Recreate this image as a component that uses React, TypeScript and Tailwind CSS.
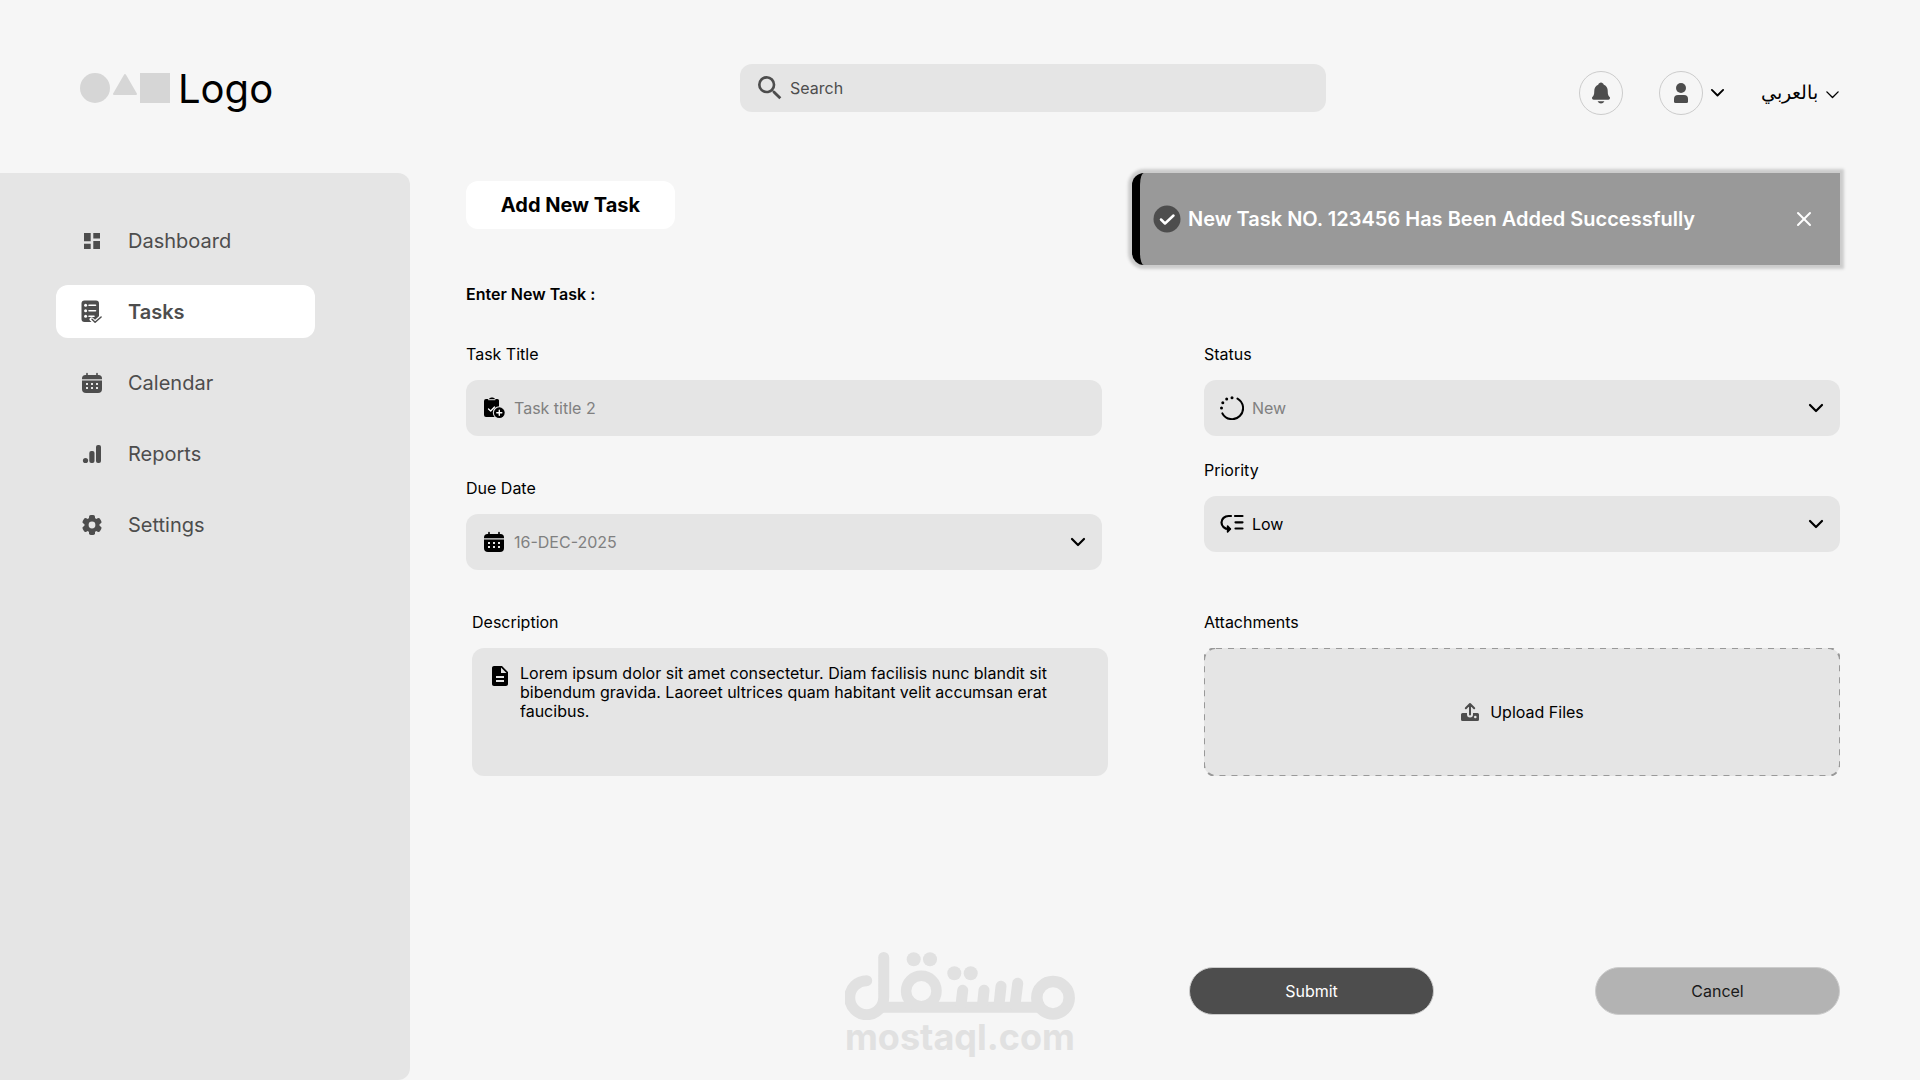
import React, { type ReactNode } from "react";
import { X } from "lucide-react";
import { MdSearch, MdDescription } from "react-icons/md";
import { IoNotifications } from "react-icons/io5";

function Chevron({ className }: { className: string }) {
  return (
    <svg viewBox="0 0 16 10" fill="none" stroke="currentColor" strokeLinecap="round" strokeLinejoin="round" className={className} aria-hidden="true">
      <path d="M2 2l6 6 6-6" />
    </svg>
  );
}

function PersonIcon() {
  return (
    <svg viewBox="0 0 24 24" fill="currentColor" className="size-6" aria-hidden="true">
      <circle cx="12" cy="7" r="5" />
      <path d="M9 14h6a4 4 0 0 1 4 4v2.500a1.500 1.500 0 0 1-1.500 1.500h-11A1.500 1.500 0 0 1 5 20.500V18a4 4 0 0 1 4-4z" />
    </svg>
  );
}

function DashboardIcon() {
  return (
    <svg viewBox="0 0 24 24" fill="currentColor" className="size-6" aria-hidden="true">
      <path d="M4 4h6.700v8.200H4zM13.300 4H20v5.400h-6.700zM4 14.800h6.700V20H4zM13.300 12H20v8h-6.700z" />
    </svg>
  );
}

function TasksIcon() {
  return (
    <svg viewBox="0 0 24 26" className="h-[26px] w-6" fill="none" aria-hidden="true">
      <rect x="1.500" y="1.500" width="17.500" height="21.500" rx="3" fill="currentColor" />
      <g fill="white">
        <circle cx="5.600" cy="6.300" r="1.500" />
        <circle cx="5.600" cy="11.800" r="1.500" />
        <circle cx="5.600" cy="17.200" r="1.500" />
      </g>
      <path d="M9 6.300h6.500M9 11.800h6.500M9 17.200h5" stroke="white" strokeWidth="1.600" strokeLinecap="round" />
      <path d="M11.500 20.300l3.600 3.200 6.500-6" stroke="white" strokeWidth="4" strokeLinecap="round" strokeLinejoin="round" />
      <path d="M12 20.300l3.100 3 6-5.300" stroke="currentColor" strokeWidth="1.500" strokeLinecap="round" strokeLinejoin="round" />
    </svg>
  );
}

function CalendarIcon() {
  return (
    <svg viewBox="0 0 24 24" className="size-6" fill="none" aria-hidden="true">
      <path d="M7 2.500v3M17 2.500v3" stroke="currentColor" strokeWidth="1.600" strokeLinecap="round" />
      <path d="M5.500 4h13A3.500 3.500 0 0 1 22 7.500v.8H2v-.8A3.500 3.500 0 0 1 5.500 4z" fill="currentColor" />
      <path d="M2 9.600h20V18a4 4 0 0 1-4 4H6a4 4 0 0 1-4-4z" fill="currentColor" />
      <path d="M6 12h2v2H6zM11 12h2v2h-2zM16 12h2v2h-2zM6 16h2v2H6zM11 16h2v2h-2zM16 16h2v2h-2z" fill="#e5e5e5" />
    </svg>
  );
}

function ReportsIcon() {
  return (
    <svg viewBox="0 0 24 24" fill="currentColor" className="size-6" aria-hidden="true">
      <circle cx="5.500" cy="18.500" r="2.600" />
      <rect x="9.300" y="9" width="5.200" height="12" rx="2" />
      <rect x="16" y="3" width="5" height="18" rx="2" />
    </svg>
  );
}

function SettingsIcon() {
  return (
    <svg viewBox="-12 -12 24 24" className="size-6 text-[#4d4d4d]" aria-hidden="true">
      <g fill="currentColor">
        <rect x="-3" y="-10" width="6" height="20" rx="1.800" />
        <rect x="-3" y="-10" width="6" height="20" rx="1.800" transform="rotate(60)" />
        <rect x="-3" y="-10" width="6" height="20" rx="1.800" transform="rotate(120)" />
        <circle r="7.600" />
      </g>
      <circle r="3.400" fill="#e5e5e5" />
    </svg>
  );
}

function ClipboardAddIcon() {
  return (
    <svg viewBox="0 0 24 24" className="size-6" fill="none" aria-hidden="true">
      <path d="M4 3h3a2.500 2 0 0 1 2.500-1.500h1A2.500 2 0 0 1 13 3h2.500A1.500 1.500 0 0 1 17 4.500V21H4a2 2 0 0 1-2-2V5a2 2 0 0 1 2-2z" fill="currentColor" />
      <path d="M6.500 3.600h6.500" stroke="#b5b5b5" strokeWidth="1.200" strokeLinecap="round" />
      <path d="M6.500 13l2.200 2 3.800-4" stroke="white" strokeWidth="1.300" strokeLinecap="round" strokeLinejoin="round" />
      <circle cx="17.300" cy="16.700" r="6.500" fill="#e5e5e5" />
      <circle cx="17.300" cy="16.700" r="5.400" fill="currentColor" />
      <path d="M17.300 14.200v5M14.800 16.700h5" stroke="white" strokeWidth="1.400" strokeLinecap="round" />
    </svg>
  );
}

function StatusIcon() {
  return (
    <svg viewBox="0 0 24 24" className="size-6" fill="none" aria-hidden="true">
      <path d="M17.500 2.600A11 11 0 1 1 2.400 17.400" stroke="currentColor" strokeWidth="2" strokeLinecap="round" />
      <g fill="currentColor">
        <circle cx="12" cy="1.700" r="1.500" />
        <circle cx="6.700" cy="3" r="1.500" />
        <circle cx="2.800" cy="6.800" r="1.500" />
        <circle cx="1.500" cy="12" r="1.500" />
      </g>
    </svg>
  );
}

function LowPriorityIcon() {
  return (
    <svg viewBox="0 0 24 24" className="size-6" fill="none" stroke="currentColor" strokeWidth="2.200" strokeLinecap="round" strokeLinejoin="round" aria-hidden="true">
      <path d="M11 4H8.500a7 6.500 0 0 0 0 13H10" />
      <path d="M7.600 14l2.800 3-2.800 3z" fill="currentColor" strokeWidth="1.600" />
      <path d="M15 4h7.500M15.500 10.300h7M15.500 16.500h7" />
    </svg>
  );
}

function UploadIcon() {
  return (
    <svg viewBox="0 0 20 20" className="size-5 text-[#4d4d4d]" fill="none" aria-hidden="true">
      <path d="M2.500 11H7v1.500a3 3 0 0 0 6 0V11h4.500A1.500 1.500 0 0 1 19 12.500v5a1.500 1.500 0 0 1-1.500 1.500h-15A1.500 1.500 0 0 1 1 17.500v-5A1.500 1.500 0 0 1 2.500 11z" fill="currentColor" />
      <circle cx="15.300" cy="15" r="1.300" fill="#e5e5e5" />
      <path d="M10 12.500V2.500M5.800 6.300L10 2l4.200 4.300" stroke="currentColor" strokeWidth="2" strokeLinecap="round" strokeLinejoin="round" />
    </svg>
  );
}

const navItems: { label: string; icon: ReactNode; active?: boolean }[] = [
  { label: "Dashboard", icon: <DashboardIcon /> },
  { label: "Tasks", icon: <TasksIcon />, active: true },
  { label: "Calendar", icon: <CalendarIcon /> },
  { label: "Reports", icon: <ReportsIcon /> },
  { label: "Settings", icon: <SettingsIcon /> },
];

function Header() {
  return (
    <header className="grid grid-cols-[660fr_586fr_514fr] items-start px-20 pt-16 pb-[58px]">
      <a href="#" className="flex h-12 items-center gap-2">
        <svg viewBox="0 0 90 30" className="h-[30px] w-[90px]" fill="#d6d6d6" aria-hidden="true">
          <circle cx="15" cy="15" r="15" />
          <path d="M45 2l11 19H34z" stroke="#d6d6d6" strokeWidth="2" strokeLinejoin="round" />
          <rect x="60" width="30" height="30" />
        </svg>
        <span className="pt-0.5 text-[40px] leading-[48px]">Logo</span>
      </a>
      <div className="flex h-12 items-center gap-1 rounded-xl bg-[#e5e5e5] px-[14px] text-[#4d4d4d]">
        <MdSearch className="size-8 shrink-0" aria-hidden="true" />
        <input type="search" aria-label="Search" placeholder="Search" className="min-w-0 flex-1 bg-transparent outline-none placeholder:text-[#4d4d4d]" />
      </div>
      <div className="mt-[7px] flex items-center justify-end gap-9">
        <button type="button" aria-label="Notifications" className="flex size-11 items-center justify-center rounded-full border border-[#cccccc] text-[#4d4d4d]">
          <IoNotifications className="size-6" />
        </button>
        <button type="button" aria-label="Account menu" className="flex items-center gap-[7px]">
          <span className="flex size-11 items-center justify-center rounded-full border border-[#cccccc] text-[#4d4d4d]">
            <PersonIcon />
          </span>
          <Chevron className="w-[15px] stroke-2" />
        </button>
        <button type="button" className="flex items-center gap-[7px]">
          <span lang="ar" dir="rtl" className="text-[19px] leading-6 font-medium">بالعربي</span>
          <Chevron className="mt-1 w-[15px] stroke-[1.5]" />
        </button>
      </div>
    </header>
  );
}

function Sidebar() {
  return (
    <aside className="w-[410px] shrink-0 rounded-r-xl bg-[#e5e5e5] pt-[41px] pl-14">
      <nav className="flex flex-col gap-[18px]">
        {navItems.map((item) => (
          <a
            key={item.label}
            href="#"
            aria-current={item.active ? "page" : undefined}
            className={
              item.active
                ? "flex h-[53px] w-[259px] items-center gap-6 rounded-xl bg-white px-6 text-xl font-semibold text-[#4d4d4d]"
                : "flex h-[53px] w-[259px] items-center gap-6 rounded-xl px-6 text-xl text-[#4d4d4d]"
            }
          >
            {item.icon}
            {item.label}
          </a>
        ))}
      </nav>
    </aside>
  );
}

function Toast() {
  return (
    <div role="status" className="flex h-[92px] w-[708px] items-center rounded-l-xl border-l-8 border-black bg-[#999999] pr-6 pl-[13px] text-white shadow-[0_0_3px_4px_#cccccc]">
      <svg viewBox="0 0 28 28" className="size-7" fill="none" aria-hidden="true">
        <circle cx="14" cy="14" r="13.500" fill="#4d4d4d" />
        <path d="M8 14.500l4 4 8.500-8" stroke="white" strokeWidth="2.500" strokeLinecap="round" strokeLinejoin="round" />
      </svg>
      <p className="ml-[7px] flex-1 text-xl font-semibold">New Task NO. 123456 Has Been Added Successfully</p>
      <button type="button" aria-label="Dismiss">
        <X className="size-6" />
      </button>
    </div>
  );
}

function Field({ label, id, icon, children }: { label: string; id: string; icon: ReactNode; children: ReactNode }) {
  return (
    <div className="flex flex-col gap-4">
      <label htmlFor={id} className="leading-5">{label}</label>
      <div className="flex h-14 items-center gap-2 rounded-xl bg-[#e5e5e5] px-4">
        {icon}
        {children}
      </div>
    </div>
  );
}

function SelectField({ label, id, icon, options, muted }: { label: string; id: string; icon: ReactNode; options: string[]; muted?: boolean }) {
  return (
    <Field label={label} id={id} icon={icon}>
      <select
        id={id}
        className={muted ? "flex-1 appearance-none bg-transparent text-[#808080] outline-none" : "flex-1 appearance-none bg-transparent outline-none"}
      >
        {options.map((o) => (
          <option key={o}>{o}</option>
        ))}
      </select>
      <Chevron className="w-4 stroke-[2.2]" />
    </Field>
  );
}

function Watermark() {
  return (
    <div className="pointer-events-none absolute bottom-[26px] left-1/2 flex w-[230px] -translate-x-1/2 flex-col items-center text-[#e1e1e1]">
      <svg viewBox="0 0 230 68" className="h-[68px] w-[230px]" fill="none" stroke="currentColor" aria-label="مستقل" role="img">
        <path d="M21.700 28.700A17 17 0 1 0 38.700 45.700V5.500" strokeWidth="11" strokeLinecap="round" />
        <path d="M34 55.300H199" strokeWidth="11" />
        <circle cx="76.300" cy="39" r="15.200" strokeWidth="10.500" />
        <circle cx="208" cy="45.700" r="16.200" strokeWidth="11.500" />
        <path d="M117.700 38.300L116 53M139 38.300L137.500 53M156 34.300L154 53M172.700 31.300L170 53" strokeWidth="11" strokeLinecap="round" />
        <g fill="currentColor" stroke="none">
          <circle cx="68.700" cy="7.300" r="7" />
          <circle cx="85" cy="7.300" r="7" />
          <circle cx="109.300" cy="21.300" r="7" />
          <circle cx="125.700" cy="21.300" r="7" />
        </g>
      </svg>
      <span className="text-[36px] leading-[34px] font-bold">mostaql.com</span>
    </div>
  );
}

export default function App() {
  return (
    <div className="relative flex min-h-screen flex-col bg-[#f6f6f6] font-['Inter','Noto_Sans',sans-serif] text-base text-black">
      <Header />
      <div className="flex flex-1">
        <Sidebar />
        <main className="flex min-w-0 flex-1 flex-col pr-20 pb-[65px] pl-14">
          <div className="flex items-start justify-between">
            <button type="button" className="mt-2 h-12 w-[209px] rounded-xl bg-white text-xl font-bold">Add New Task</button>
            <Toast />
          </div>
          <form className="mt-[19px] flex flex-1 flex-col" onSubmit={(e) => e.preventDefault()}>
            <h1 className="leading-5 font-semibold">Enter New Task :</h1>
            <div className="mt-10 grid grid-cols-2 gap-x-[102px]">
              <div className="flex flex-col gap-[42px]">
                <Field label="Task Title" id="title" icon={<ClipboardAddIcon />}>
                  <input id="title" type="text" placeholder="Task title 2" className="min-w-0 flex-1 bg-transparent outline-none placeholder:text-[#808080]" />
                </Field>
                <SelectField label="Due Date" id="due" icon={<CalendarIcon />} options={["16-DEC-2025"]} muted />
              </div>
              <div className="flex flex-col gap-6">
                <SelectField label="Status" id="status" icon={<StatusIcon />} options={["New", "In Progress", "Done"]} muted />
                <SelectField label="Priority" id="priority" icon={<LowPriorityIcon />} options={["Low", "Medium", "High"]} />
              </div>
            </div>
            <div className="mt-[42px] grid grid-cols-2 gap-x-[102px]">
              <div className="-mr-1.5 ml-1.5 flex flex-col gap-4">
                <label htmlFor="description" className="leading-5">Description</label>
                <div className="flex h-32 gap-2 rounded-xl bg-[#e5e5e5] p-4">
                  <MdDescription className="size-6 shrink-0" aria-hidden="true" />
                  <textarea
                    id="description"
                    className="min-w-0 flex-1 resize-none bg-transparent leading-[19px] outline-none"
                    defaultValue="Lorem ipsum dolor sit amet consectetur. Diam facilisis nunc blandit sit bibendum gravida. Laoreet ultrices quam habitant velit accumsan erat faucibus."
                  />
                </div>
              </div>
              <div className="flex flex-col gap-4">
                <span className="leading-5" id="attachments-label">Attachments</span>
                <label className="relative flex h-32 cursor-pointer items-center justify-center gap-[10px] rounded-xl bg-[#e5e5e5]">
                  <svg className="absolute inset-0 size-full" fill="none" aria-hidden="true">
                    <rect x="0" y="0" width="100%" height="100%" rx="12" stroke="#999999" strokeWidth="2" strokeDasharray="6 6" />
                  </svg>
                  <UploadIcon />
                  Upload Files
                  <input type="file" multiple aria-describedby="attachments-label" className="sr-only" />
                </label>
              </div>
            </div>
            <div className="mt-auto flex justify-end gap-[161px] pt-10">
              <button type="submit" className="h-12 w-[245px] rounded-full border border-[#cccccc] bg-[#4d4d4d] text-white">Submit</button>
              <button type="button" className="h-12 w-[245px] rounded-full border border-[#cccccc] bg-[#b3b3b3] text-[#1a1a1a]">Cancel</button>
            </div>
          </form>
        </main>
      </div>
      <Watermark />
    </div>
  );
}
